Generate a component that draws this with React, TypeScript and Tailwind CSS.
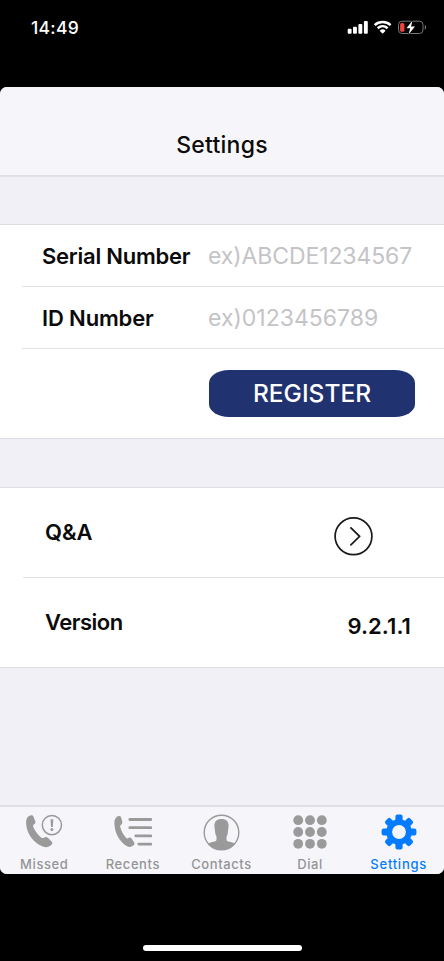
import React from 'react'
import clsx from 'clsx'

const MissedIcon: React.FC = () => (
  <svg width="38" height="36" viewBox="0 0 38 36" fill="none">
    <path d="M3.900 2.100C5.700 1 7.700.9 8.400 2.400l1.900 4.800c.5 1.400-.2 2.500-1.600 3.400-.9.7-.8 1.600-.2 2.900 1.700 3.900 4.100 7.100 7.400 9.700 1.200 1 2 1.200 3 .5 1.500-1.100 2.700-1 3.900 0l3.600 3.500c1.400 1.400 1.200 2.600-.3 3.900-2.300 2.200-5.300 2.600-8.400 1.300C9.100 29.500 1.500 19.800 1.100 9.600.9 5.900 1.800 3.500 3.900 2.100Z" fill="#9a9a9b" />
    <circle cx="26.900" cy="11.100" r="9.600" stroke="#9a9a9b" strokeWidth="1.500" />
    <path d="M25.500 5.300h2.800l-.5 7.600h-1.800Z" fill="#9a9a9b" />
    <circle cx="26.900" cy="15.600" r="1.500" fill="#9a9a9b" />
  </svg>
)

const RecentsIcon: React.FC = () => (
  <svg width="38" height="36" viewBox="0 0 38 36" fill="none">
    <path d="M2.900 2.700C4.500 1.600 6.400 1.500 7 3.100l1.300 4.700c.3 1.300-.3 2.200-1.500 3.100-.8.7-.7 1.600-.3 2.900 1.100 3.800 2.800 6.900 5.300 9.600 1 1.100 1.700 1.200 2.500.7 1.200-.8 2.300-.7 3.300.4l2.300 3.400c1 1.500.6 2.700-.7 3.700-2.100 1.700-4.200 1.800-6.600.3C5.600 27.700.6 19 .4 9.400.3 6.200 1.100 4 2.900 2.700Z" fill="#9a9a9b" />
    <path d="M15.800 5.500h21M15.800 13.700h21M21.800 21.900h15M24.800 30.100h12" stroke="#9a9a9b" strokeWidth="2.800" strokeLinecap="round" />
  </svg>
)

const ContactsIcon: React.FC = () => (
  <svg width="37" height="37" viewBox="0 0 37 37" fill="none">
    <circle cx="18.500" cy="18.500" r="17.300" stroke="#9a9a9b" strokeWidth="1.400" />
    <path d="M18.500 5.100c4.700 0 7.200 2.400 7.100 6.900l-.8 7.100c-.2 1.500-.8 2.600-1.300 3.700v2.600c0 1.200.6 1.700 2 2.100 3.200.9 5.400 1.300 6.900 2.300-3.200 3.900-8 6.100-13.900 6.100S7.800 33.700 4.600 29.800c1.500-1 3.700-1.400 6.900-2.300 1.400-.4 2-.9 2-2.100v-2.600c-.5-1.100-1.100-2.200-1.300-3.700l-.8-7.100c-.1-4.500 2.400-6.900 7.100-6.900Z" fill="#9a9a9b" />
  </svg>
)

const DialIcon: React.FC = () => (
  <svg width="34" height="34" viewBox="0 0 34 34" fill="#9a9a9b">
    {[5.200, 17, 28.800].map((cy) => [5.200, 17, 28.800].map((cx) => (
      <circle key={`${cx}-${cy}`} cx={cx} cy={cy} r="4.900" />
    )))}
  </svg>
)

const SettingsIcon: React.FC = () => (
  <svg width="36" height="36" viewBox="0 0 36 36" fill="none">
    {[0, 45, 90, 135].map((angle) => (
      <rect
        key={angle}
        x="14.400"
        y="0.600"
        width="7.200"
        height="34.800"
        rx="2"
        transform={`rotate(${angle} 18 18)`}
        fill="#057cff"
      />
    ))}
    <circle cx="18" cy="18" r="12.800" fill="#057cff" />
    <circle cx="18" cy="18" r="6.900" fill="#f6f6fa" />
  </svg>
)

const StatusBar: React.FC = () => (
  <div className="h-[87px] shrink-0 flex items-start justify-between pl-[31px] pr-[17px] text-white">
    <span className="mt-[18px] text-[17.500px] leading-5 font-medium tracking-[0.300px]">14:49</span>
    <div className="mt-[19px] flex items-center">
      <svg width="21" height="16" viewBox="0 0 21 16" fill="white">
        <rect x="0.700" y="9.800" width="3.900" height="5" rx="1" />
        <rect x="6" y="7.700" width="3.900" height="7.100" rx="1" />
        <rect x="11.400" y="4.900" width="3.900" height="9.900" rx="1" />
        <rect x="16.900" y="2" width="3.900" height="12.800" rx="1" />
      </svg>
      <svg className="ml-[5px]" width="19" height="16" viewBox="0 0 19 16" fill="none">
        <path d="M1.700 6.100a12 12 0 0 1 15.900 0M4.700 9.200a7.600 7.600 0 0 1 9.900 0" stroke="white" strokeWidth="2.500" />
        <path d="m9.650 14.700-3-3a4.300 4.300 0 0 1 6 0Z" fill="white" />
      </svg>
      <svg className="ml-[5px]" width="30" height="16" viewBox="0 0 30 16" fill="none">
        <rect x="1.500" y="2.200" width="24.500" height="12.300" rx="3.500" stroke="#777" />
        <path d="M27.800 6v4.700c1.800-.7 1.800-4 0-4.700Z" fill="#777" />
        <rect x="3.100" y="3.900" width="4.300" height="8.900" rx="1.500" fill="#ee443b" />
        <path d="M15.500 1.400 9.500 9.300h3.700l-1.700 6.200L18 7.400h-4Z" fill="white" stroke="black" strokeWidth="1.200" paintOrder="stroke" />
      </svg>
    </div>
  </div>
)

const TABS = [
  { label: 'Missed', icon: MissedIcon },
  { label: 'Recents', icon: RecentsIcon },
  { label: 'Contacts', icon: ContactsIcon },
  { label: 'Dial', icon: DialIcon },
  { label: 'Settings', icon: SettingsIcon },
]

const TabBar: React.FC = () => (
  <nav className="h-[69px] shrink-0 grid grid-cols-5 pr-px border-t-2 border-[#dfdee4] bg-[#f6f6fa]">
    {TABS.map(({ label, icon: Icon }) => (
      <button key={label} className="flex flex-col items-center">
        <span className="mt-[6px] h-[38px] flex items-center justify-center"><Icon /></span>
        <span
          className={clsx(
            'mt-[5px] text-[13px] leading-4 font-medium whitespace-nowrap',
            label === 'Settings' ? 'tracking-[0.750px] text-[#057cff]' : 'tracking-[0.600px] text-[#949496]',
          )}
        >
          {label}
        </span>
      </button>
    ))}
  </nav>
)

const App: React.FC = () => (
  <div className="w-[444px] h-[961px] flex flex-col bg-black overflow-hidden font-['Inter',sans-serif] text-[#0b0b0c]">
    <StatusBar />

    <div className="h-[787px] shrink-0 flex flex-col rounded-[7px] overflow-hidden bg-[#f0f0f6]">
      <header className="h-[90px] shrink-0 flex justify-center border-b-2 border-[#e1e0e6] bg-[#f6f6fa]">
        <h1 className="mt-[43px] text-[23px] leading-[30px] font-[550] tracking-[0.250px]">Settings</h1>
      </header>

      <section className="mt-[47px] h-[215px] shrink-0 border-y border-[#dddde2] bg-white">
        <div className="ml-[22px] h-[62px] flex items-center pl-5 pt-px border-b border-[#e3e3e6]">
          <span className="w-[166px] text-[22px] font-semibold tracking-[-0.250px] whitespace-nowrap">Serial Number</span>
          <span className="mt-px text-[23px] tracking-[-0.100px] text-[#c4c4c7] whitespace-nowrap">ex)ABCDE1234567</span>
        </div>
        <div className="ml-[22px] h-[62px] flex items-center pl-5 pt-px border-b border-[#e3e3e6]">
          <span className="mt-px w-[166px] text-[22px] font-semibold tracking-[-0.150px] whitespace-nowrap">ID Number</span>
          <span className="mt-px text-[23px] text-[#c4c4c7] whitespace-nowrap">ex)0123456789</span>
        </div>
        <button className="ml-[209px] mt-[21px] w-[206px] h-[47px] rounded-[20px/13px] bg-[#20326f] text-white text-[24.500px] font-medium">
          REGISTER
        </button>
      </section>

      <section className="mt-[48px] h-[181px] shrink-0 border-y border-[#dddde2] bg-white">
        <div className="ml-[23px] h-[90px] flex items-center justify-between pl-[22px] pr-[71px] border-b border-[#e3e3e6]">
          <span className="text-[22px] font-semibold">Q&amp;A</span>
          <svg className="mt-[7px]" width="39" height="39" viewBox="0 0 39 39" fill="none" stroke="#19191a" strokeWidth="1.700">
            <circle cx="19.500" cy="19.300" r="18.400" />
            <path d="m16.400 10.300 9.200 9-9.200 9" />
          </svg>
        </div>
        <div className="ml-[23px] h-[89px] flex items-center justify-between pl-[22px] pr-[33px]">
          <span className="text-[22px] font-semibold tracking-[-0.500px]">Version</span>
          <span className="mt-[7px] text-[22px] font-semibold tracking-[0.100px]">9.2.1.1</span>
        </div>
      </section>

      <div className="flex-1" />
      <TabBar />
    </div>

    <div className="mt-[71px] mx-auto w-[159px] h-[6px] rounded-full bg-white" />
  </div>
)

export default App
